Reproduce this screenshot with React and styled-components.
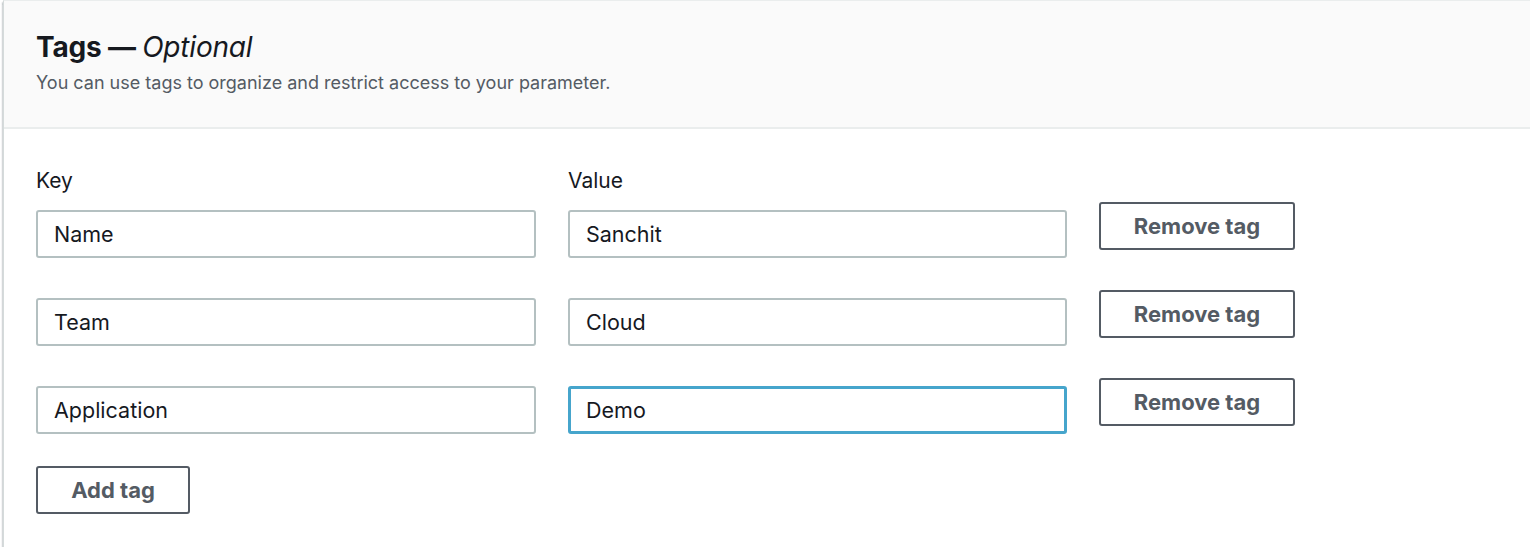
import React from "react";
import styled, { createGlobalStyle } from "styled-components";

const FONT = `Inter, "Liberation Sans", Arial, sans-serif`;

const GlobalStyle = createGlobalStyle`
  html, body {
    margin: 0;
    padding: 0;
    background: #ffffff;
    overflow: hidden;
  }
  body {
    font-family: ${FONT};
    color: #16191f;
  }
`;

const Page = styled.div`
  padding-left: 3px;
  width: 1560px;
`;

const Card = styled.section`
  background: #ffffff;
  border-top: 1px solid #eaeded;
  border-left: 1px solid #d5dbdb;
  box-shadow: 0 1.5px 1.5px 0 rgba(0, 28, 36, 0.4),
    -1px 1.5px 1.5px 0 rgba(0, 28, 36, 0.15);
`;

const Header = styled.header`
  background: #fafafa;
  border-bottom: 2px solid #eaeded;
  padding: 30px 32px 32px;
`;

const Title = styled.h2`
  margin: 0;
  font-size: 28px;
  line-height: 33px;
  font-weight: 700;
  letter-spacing: -0.2px;
  color: #16191f;

  em {
    font-weight: 400;
    font-style: italic;
  }
`;

const Description = styled.p`
  margin: 7px 0 0;
  font-size: 18px;
  line-height: 24px;
  color: #545b64;
`;

const Body = styled.div`
  padding: 38px 32px 33px;
`;

const Grid = styled.div`
  display: grid;
  grid-template-columns: 500px 499px auto;
  column-gap: 32px;
  align-items: start;
`;

const LabelRow = styled(Grid)`
  margin-bottom: 15px;
`;

const Label = styled.label`
  font-size: 21px;
  line-height: 28px;
  color: #16191f;
`;

const Rows = styled.div`
  display: flex;
  flex-direction: column;
  gap: 40px;
`;

const Input = styled.input`
  box-sizing: border-box;
  width: 100%;
  height: 48px;
  margin: 0;
  padding: 0 16px;
  font-family: ${FONT};
  font-size: 21.5px;
  color: #16191f;
  background: #ffffff;
  border: ${(p) => (p.$focused ? "3px solid #46a5cc" : "2px solid #b4c0c1")};
  padding-left: ${(p) => (p.$focused ? "15px" : "16px")};
  border-radius: 3px;
  outline: none;
`;

const Button = styled.button`
  box-sizing: border-box;
  height: 48px;
  width: ${(p) => p.$width};
  margin-top: ${(p) => p.$offset || "0"};
  padding: 0;
  background: #ffffff;
  border: 2px solid #545b64;
  border-radius: 3px;
  font-family: ${FONT};
  font-size: 22px;
  font-weight: 700;
  color: #545b64;
  cursor: pointer;
  justify-self: start;
`;

const Footer = styled.div`
  margin-top: 32px;
`;

const tags = [
  { key: "Name", value: "Sanchit" },
  { key: "Team", value: "Cloud" },
  { key: "Application", value: "Demo", focused: true },
];

export default function App() {
  return (
    <Page>
      <GlobalStyle />
      <Card>
        <Header>
          <Title>
            Tags — <em>Optional</em>
          </Title>
          <Description>
            You can use tags to organize and restrict access to your parameter.
          </Description>
        </Header>
        <Body>
          <LabelRow>
            <Label>Key</Label>
            <Label>Value</Label>
          </LabelRow>
          <Rows>
            {tags.map((t) => (
              <Grid key={t.key}>
                <Input defaultValue={t.key} />
                <Input defaultValue={t.value} $focused={t.focused} />
                <Button $width="196px" $offset="-8px">
                  Remove tag
                </Button>
              </Grid>
            ))}
          </Rows>
          <Footer>
            <Button $width="154px">Add tag</Button>
          </Footer>
        </Body>
      </Card>
    </Page>
  );
}
